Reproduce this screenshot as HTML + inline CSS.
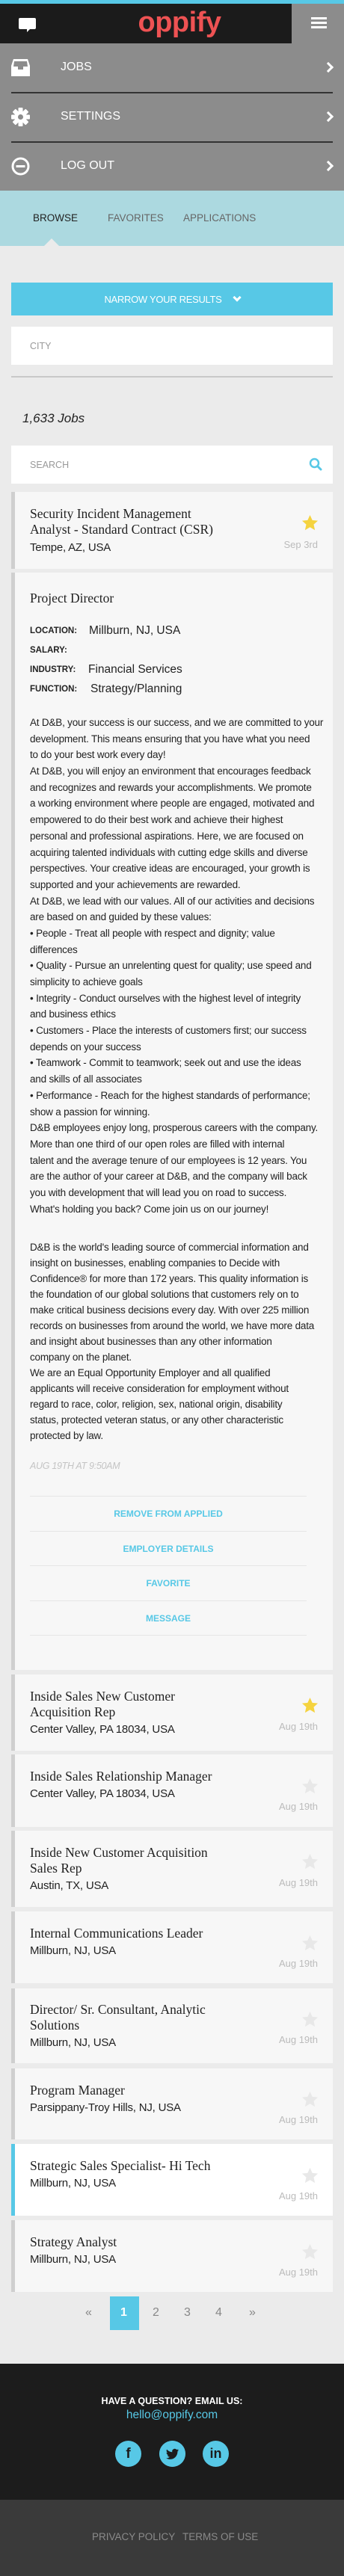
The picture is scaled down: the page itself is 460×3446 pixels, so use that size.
<!DOCTYPE html>
<html><head><meta charset="utf-8">
<style>
*{margin:0;padding:0;box-sizing:border-box}
body{width:460px;height:3446px;position:relative;background:#ebebeb;font-family:"Liberation Sans",sans-serif;overflow:hidden}
.a{position:absolute}
.menu-t{position:absolute;left:81px;color:#fff;font-size:16px;line-height:20px}
.chev{position:absolute;left:434px;width:10px;height:10px;border-right:3px solid #fff;border-top:3px solid #fff;transform:rotate(45deg)}
.sep{position:absolute;left:15px;width:430px;height:2px;background:#333}
.card{position:absolute;left:15px;width:430px;background:#f7f7f7;border-left:5px solid #cfcfcf}
.card.sel{background:#fff;border-left-color:#57c8e6}
.t{position:absolute;left:20px;font-family:"Liberation Serif",serif;font-size:17.5px;line-height:21px;color:#222;white-space:nowrap}
.l{position:absolute;left:20px;font-size:15px;line-height:20px;color:#222;white-space:nowrap;letter-spacing:-0.2px}
.d{position:absolute;right:20px;font-size:13px;line-height:16px;color:#bbb}
.st{position:absolute;left:383px;width:23px;height:23px}
.body{position:absolute;left:40px;top:956px;font-size:13.5px;color:#222;letter-spacing:-0.2px}
.body div{white-space:nowrap;line-height:21.7px;height:21.7px}
.body2 div{line-height:21px;height:21px}
.lab{position:absolute;left:40px;font-size:11.5px;font-weight:bold;color:#222;line-height:16px}
.val{position:absolute;font-size:15.5px;color:#222;line-height:20px}
.act{position:absolute;left:40px;width:370px;text-align:center;color:#57c8e6;font-size:12px;font-weight:bold;line-height:16px}
.hl{position:absolute;left:40px;width:370px;height:1px;background:#e6e6e6}
.pg{position:absolute;top:3084px;font-size:16px;color:#888;line-height:20px}
.soc{position:absolute;top:3265px;width:35px;height:35px;border-radius:50%;background:#57c8e6;color:#1c1c1c;font-weight:bold;text-align:center;line-height:35px;font-size:19px}
</style></head><body>
<div class="a" style="left:0;top:0;width:460px;height:5px;background:#57c8e6"></div>
<div class="a" style="left:0;top:5px;width:460px;height:53px;background:#8c8c8c"></div>
<div class="a" style="left:0;top:5px;width:390px;height:53px;background:#1b1b1b"></div>
<svg class="a" style="left:24px;top:23px" width="25" height="21" viewBox="0 0 25 21"><path d="M3 1h19a2 2 0 0 1 2 2v11a2 2 0 0 1-2 2H16l-4 4v-4H3a2 2 0 0 1-2-2V3a2 2 0 0 1 2-2z" fill="#fff"/></svg>
<div class="a" style="left:150px;top:6px;width:180px;text-align:center;color:#ee5253;font-size:38px;font-weight:bold;line-height:48px;letter-spacing:-0.5px">oppify</div>
<div class="a" style="left:416px;top:23px;width:21px;height:3px;background:#fff"></div>
<div class="a" style="left:416px;top:29px;width:21px;height:3px;background:#fff"></div>
<div class="a" style="left:416px;top:35px;width:21px;height:3px;background:#fff"></div>

<div class="a" style="left:0;top:58px;width:460px;height:197px;background:#8c8c8c"></div>
<svg class="a" style="left:15px;top:79px" width="25" height="23" viewBox="0 0 25 23"><path d="M3 0h19l3 9v14H0V9z M4 3l-1 7h6v4h7v-4h6l-1-7z" fill="#fff" fill-rule="evenodd"/></svg>
<div class="menu-t" style="top:80px">JOBS</div><div class="chev" style="top:85px"></div>
<div class="sep" style="top:123px"></div>
<svg class="a" style="left:15px;top:144px" width="25" height="25" viewBox="-12.5 -12.5 25 25"><g fill="#fff"><circle r="8"/><rect x="-3" y="-12.5" width="6" height="25" rx="1"/><rect x="-3" y="-12.5" width="6" height="25" rx="1" transform="rotate(45)"/><rect x="-3" y="-12.5" width="6" height="25" rx="1" transform="rotate(90)"/><rect x="-3" y="-12.5" width="6" height="25" rx="1" transform="rotate(135)"/></g><circle r="3.5" fill="#8c8c8c"/></svg>
<div class="menu-t" style="top:146px">SETTINGS</div><div class="chev" style="top:151px"></div>
<div class="sep" style="top:189px"></div>
<svg class="a" style="left:15px;top:210px" width="25" height="25" viewBox="0 0 25 25"><circle cx="12.5" cy="12.5" r="10.5" fill="none" stroke="#fff" stroke-width="3"/><rect x="6.5" y="11" width="12" height="3" fill="#fff"/></svg>
<div class="menu-t" style="top:212px">LOG OUT</div><div class="chev" style="top:217px"></div>

<div class="a" style="left:0;top:255px;width:460px;height:74px;background:#acd9e0"></div>
<div class="a" style="left:44px;top:284px;font-size:13.5px;color:#222;line-height:16px">BROWSE</div>
<div class="a" style="left:144px;top:284px;font-size:13.5px;color:#666;line-height:16px">FAVORITES</div>
<div class="a" style="left:245px;top:284px;font-size:13.5px;color:#666;line-height:16px">APPLICATIONS</div>
<div class="a" style="left:59px;top:319px;width:0;height:0;border-left:10px solid transparent;border-right:10px solid transparent;border-bottom:10px solid #ebebeb"></div>

<div class="a" style="left:15px;top:378px;width:430px;height:44px;background:#57c8e6;display:flex;align-items:center;justify-content:center;color:#fff;font-size:13px;letter-spacing:-0.3px">NARROW YOUR RESULTS<span style="display:inline-block;width:8px;height:8px;border-right:3px solid #fff;border-bottom:3px solid #fff;transform:rotate(45deg);margin:-4px 0 0 16px"></span></div>
<div class="a" style="left:15px;top:437px;width:430px;height:51px;background:#fff"></div>
<div class="a" style="left:40px;top:455px;color:#999;font-size:12.5px;line-height:16px">CITY</div>
<div class="a" style="left:15px;top:503px;width:430px;height:2px;background:#c8c8c8"></div>
<div class="a" style="left:30px;top:549px;font-style:italic;font-size:17px;color:#222;line-height:22px">1,633 Jobs</div>
<div class="a" style="left:15px;top:596px;width:430px;height:51px;background:#fff"></div>
<div class="a" style="left:40px;top:614px;color:#999;font-size:12.5px;line-height:16px">SEARCH</div>
<svg class="a" style="left:413px;top:612px" width="18" height="18" viewBox="0 0 18 18"><circle cx="7.5" cy="7.5" r="5.5" fill="none" stroke="#57c8e6" stroke-width="2.5"/><path d="M11.5 11.5L16 16" stroke="#57c8e6" stroke-width="3" stroke-linecap="round"/></svg>

<div class="card" style="top:658px;height:103px">
<div class="t" style="top:19px">Security Incident Management<br>Analyst - Standard Contract (CSR)</div>
<div class="l" style="top:65px">Tempe, AZ, USA</div>
<svg class="st" style="top:30px" viewBox="0 0 24 24"><path d="M12 1l3.3 7.2 7.7.8-5.8 5.2 1.7 7.8L12 18l-6.9 4 1.7-7.8L1 9l7.7-.8z" fill="#f5d33f"/></svg>
<div class="d" style="top:63px">Sep 3rd</div>
</div>

<div class="card" style="top:766px;height:1468px"></div>
<div class="a" style="left:40px;top:789px;font-family:'Liberation Serif',serif;font-size:17.5px;color:#222;line-height:22px">Project Director</div>
<div class="lab" style="top:836px">LOCATION:</div><div class="val" style="left:119px;top:834px">Millburn, NJ, USA</div>
<div class="lab" style="top:862px">SALARY:</div>
<div class="lab" style="top:888px">INDUSTRY:</div><div class="val" style="left:118px;top:886px">Financial Services</div>
<div class="lab" style="top:914px">FUNCTION:</div><div class="val" style="left:121px;top:912px">Strategy/Planning</div>
<div class="body">
<div>At D&amp;B, your success is our success, and we are committed to your</div>
<div>development. This means ensuring that you have what you need</div>
<div>to do your best work every day!</div>
<div>At D&amp;B, you will enjoy an environment that encourages feedback</div>
<div>and recognizes and rewards your accomplishments. We promote</div>
<div>a working environment where people are engaged, motivated and</div>
<div>empowered to do their best work and achieve their highest</div>
<div>personal and professional aspirations. Here, we are focused on</div>
<div>acquiring talented individuals with cutting edge skills and diverse</div>
<div>perspectives. Your creative ideas are encouraged, your growth is</div>
<div>supported and your achievements are rewarded.</div>
<div>At D&amp;B, we lead with our values. All of our activities and decisions</div>
<div>are based on and guided by these values:</div>
<div>• People - Treat all people with respect and dignity; value</div>
<div>differences</div>
<div>• Quality - Pursue an unrelenting quest for quality; use speed and</div>
<div>simplicity to achieve goals</div>
<div>• Integrity - Conduct ourselves with the highest level of integrity</div>
<div>and business ethics</div>
<div>• Customers - Place the interests of customers first; our success</div>
<div>depends on your success</div>
<div>• Teamwork - Commit to teamwork; seek out and use the ideas</div>
<div>and skills of all associates</div>
<div>• Performance - Reach for the highest standards of performance;</div>
<div>show a passion for winning.</div>
<div>D&amp;B employees enjoy long, prosperous careers with the company.</div>
<div>More than one third of our open roles are filled with internal</div>
<div>talent and the average tenure of our employees is 12 years. You</div>
<div>are the author of your career at D&amp;B, and the company will back</div>
<div>you with development that will lead you on road to success.</div>
<div>What's holding you back? Come join us on our journey!</div>
<div style="height:30px"></div>
<div class="body2">
<div>D&amp;B is the world's leading source of commercial information and</div>
<div>insight on businesses, enabling companies to Decide with</div>
<div>Confidence® for more than 172 years. This quality information is</div>
<div>the foundation of our global solutions that customers rely on to</div>
<div>make critical business decisions every day. With over 225 million</div>
<div>records on businesses from around the world, we have more data</div>
<div>and insight about businesses than any other information</div>
<div>company on the planet.</div>
<div>We are an Equal Opportunity Employer and all qualified</div>
<div>applicants will receive consideration for employment without</div>
<div>regard to race, color, religion, sex, national origin, disability</div>
<div>status, protected veteran status, or any other characteristic</div>
<div>protected by law.</div>
</div>
</div>
<div class="a" style="left:40px;top:1953px;font-style:italic;font-size:12.5px;color:#c4c4c4;line-height:16px;letter-spacing:-0.3px">AUG 19TH AT 9:50AM</div>
<div class="hl" style="top:2001px"></div>
<div class="act" style="top:2017px">REMOVE FROM APPLIED</div>
<div class="hl" style="top:2048px"></div>
<div class="act" style="top:2064px">EMPLOYER DETAILS</div>
<div class="hl" style="top:2094px"></div>
<div class="act" style="top:2110px">FAVORITE</div>
<div class="hl" style="top:2141px"></div>
<div class="act" style="top:2157px">MESSAGE</div>
<div class="hl" style="top:2187px"></div>

<div class="card" style="top:2240px;height:102px">
<div class="t" style="top:19px">Inside Sales New Customer<br>Acquisition Rep</div>
<div class="l" style="top:64px">Center Valley, PA 18034, USA</div>
<svg class="st" style="top:30px" viewBox="0 0 24 24"><path d="M12 1l3.3 7.2 7.7.8-5.8 5.2 1.7 7.8L12 18l-6.9 4 1.7-7.8L1 9l7.7-.8z" fill="#f5d33f"/></svg>
<div class="d" style="top:62px">Aug 19th</div>
</div>
<div class="card" style="top:2347px;height:97px">
<div class="t" style="top:19px">Inside Sales Relationship Manager</div>
<div class="l" style="top:43px">Center Valley, PA 18034, USA</div>
<svg class="st" style="top:31px" viewBox="0 0 24 24"><path d="M12 1l3.3 7.2 7.7.8-5.8 5.2 1.7 7.8L12 18l-6.9 4 1.7-7.8L1 9l7.7-.8z" fill="#e8e8e8"/></svg>
<div class="d" style="top:62px">Aug 19th</div>
</div>
<div class="card" style="top:2449px;height:102px">
<div class="t" style="top:19px">Inside New Customer Acquisition<br>Sales Rep</div>
<div class="l" style="top:64px">Austin, TX, USA</div>
<svg class="st" style="top:30px" viewBox="0 0 24 24"><path d="M12 1l3.3 7.2 7.7.8-5.8 5.2 1.7 7.8L12 18l-6.9 4 1.7-7.8L1 9l7.7-.8z" fill="#e8e8e8"/></svg>
<div class="d" style="top:62px">Aug 19th</div>
</div>
<div class="card" style="top:2557px;height:96px">
<div class="t" style="top:19px">Internal Communications Leader</div>
<div class="l" style="top:43px">Millburn, NJ, USA</div>
<svg class="st" style="top:31px" viewBox="0 0 24 24"><path d="M12 1l3.3 7.2 7.7.8-5.8 5.2 1.7 7.8L12 18l-6.9 4 1.7-7.8L1 9l7.7-.8z" fill="#e8e8e8"/></svg>
<div class="d" style="top:62px">Aug 19th</div>
</div>
<div class="card" style="top:2660px;height:100px">
<div class="t" style="top:18px">Director/ Sr. Consultant, Analytic<br>Solutions</div>
<div class="l" style="top:63px">Millburn, NJ, USA</div>
<svg class="st" style="top:30px" viewBox="0 0 24 24"><path d="M12 1l3.3 7.2 7.7.8-5.8 5.2 1.7 7.8L12 18l-6.9 4 1.7-7.8L1 9l7.7-.8z" fill="#e8e8e8"/></svg>
<div class="d" style="top:61px">Aug 19th</div>
</div>
<div class="card" style="top:2767px;height:95px">
<div class="t" style="top:19px">Program Manager</div>
<div class="l" style="top:43px">Parsippany-Troy Hills, NJ, USA</div>
<svg class="st" style="top:30px" viewBox="0 0 24 24"><path d="M12 1l3.3 7.2 7.7.8-5.8 5.2 1.7 7.8L12 18l-6.9 4 1.7-7.8L1 9l7.7-.8z" fill="#e8e8e8"/></svg>
<div class="d" style="top:61px">Aug 19th</div>
</div>
<div class="card sel" style="top:2868px;height:96px">
<div class="t" style="top:19px">Strategic Sales Specialist- Hi Tech</div>
<div class="l" style="top:43px">Millburn, NJ, USA</div>
<svg class="st" style="top:31px" viewBox="0 0 24 24"><path d="M12 1l3.3 7.2 7.7.8-5.8 5.2 1.7 7.8L12 18l-6.9 4 1.7-7.8L1 9l7.7-.8z" fill="#e8e8e8"/></svg>
<div class="d" style="top:62px">Aug 19th</div>
</div>
<div class="card" style="top:2970px;height:96px">
<div class="t" style="top:19px">Strategy Analyst</div>
<div class="l" style="top:43px">Millburn, NJ, USA</div>
<svg class="st" style="top:31px" viewBox="0 0 24 24"><path d="M12 1l3.3 7.2 7.7.8-5.8 5.2 1.7 7.8L12 18l-6.9 4 1.7-7.8L1 9l7.7-.8z" fill="#e8e8e8"/></svg>
<div class="d" style="top:62px">Aug 19th</div>
</div>

<div class="a" style="left:147px;top:3072px;width:39px;height:45px;background:#57c8e6"></div>
<div class="pg" style="left:114px">«</div>
<div class="pg" style="left:161px;color:#fff;font-weight:bold">1</div>
<div class="pg" style="left:204px">2</div>
<div class="pg" style="left:246px">3</div>
<div class="pg" style="left:288px">4</div>
<div class="pg" style="left:333px">»</div>

<div class="a" style="left:0;top:3162px;width:460px;height:182px;background:#1c1c1c"></div>
<div class="a" style="left:0;top:3204px;width:460px;text-align:center;color:#fff;font-size:12.5px;font-weight:bold;line-height:16px">HAVE A QUESTION? EMAIL US:</div>
<div class="a" style="left:0;top:3221px;width:460px;text-align:center;color:#57c8e6;font-size:15.5px;line-height:20px">hello@oppify.com</div>
<div class="soc" style="left:154px">f</div>
<svg class="soc" style="left:213px" viewBox="0 0 35 35"><circle cx="17.5" cy="17.5" r="17.5" fill="#57c8e6"/><path d="M26 12.5c-.6.3-1.3.5-2 .6.7-.4 1.3-1.1 1.5-1.9-.7.4-1.4.7-2.2.8a3.5 3.5 0 0 0-6 3.2c-2.9-.1-5.5-1.5-7.2-3.6-.9 1.600-.4 3.600 1.100 4.600-.6 0-1.100-.2-1.600-.4 0 1.700 1.200 3.200 2.800 3.500-.5.1-1.100.2-1.600.1.5 1.400 1.800 2.400 3.300 2.400A7 7 0 0 1 9 23.3c1.600 1 3.400 1.600 5.400 1.600 6.500 0 10.200-5.500 10-10.500.7-.5 1.200-1.100 1.600-1.900z" fill="#1c1c1c"/></svg>
<div class="soc" style="left:271px;font-size:18px">in</div>

<div class="a" style="left:0;top:3344px;width:460px;height:102px;background:#3a3a3a"></div>
<div class="a" style="left:123px;top:3386px;color:#8a8a8a;font-size:13.5px;line-height:16px">PRIVACY POLICY</div>
<div class="a" style="left:244px;top:3386px;color:#8a8a8a;font-size:13.5px;line-height:16px">TERMS OF USE</div>
</body></html>
